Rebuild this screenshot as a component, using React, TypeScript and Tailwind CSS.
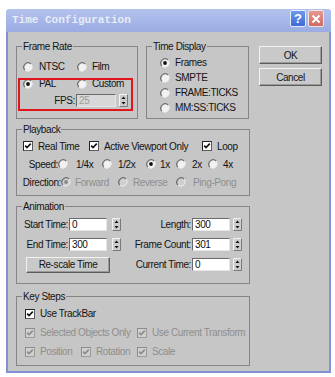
import React from 'react';

const FONT = "font-['Liberation_Sans',Arial,sans-serif] text-[10px] tracking-[-0.4px] whitespace-nowrap";

function Radio({ checked = false, disabled = false }: { checked?: boolean; disabled?: boolean }) {
  return (
    <svg width="10" height="10" viewBox="0 0 10 10" className="shrink-0">
      <circle cx="5" cy="5" r="4.4" fill={disabled ? '#cfcfcf' : '#f2f2f2'} />
      <path d="M1.9 8.1 A4.4 4.4 0 0 1 8.1 1.9" stroke="#6e6e6e" strokeWidth="1.3" fill="none" />
      <path d="M8.1 1.9 A4.4 4.4 0 0 1 1.9 8.1" stroke="#ececec" strokeWidth="1" fill="none" />
      {checked && <circle cx="5" cy="5" r="1.9" fill={disabled ? '#8a8a8a' : '#111'} />}
    </svg>
  );
}

function Check({ checked = true, disabled = false }: { checked?: boolean; disabled?: boolean }) {
  return (
    <svg width="10" height="10" viewBox="0 0 10 10" className="shrink-0">
      <rect x="0.5" y="0.5" width="9" height="9" fill={disabled ? '#d0d0d0' : '#fff'} stroke={disabled ? '#9c9c9c' : '#5a5a5a'} />
      <path d="M0.5 9.5 V0.5 H9.5" stroke={disabled ? '#8c8c8c' : '#222'} fill="none" />
      {checked && (
        <path d="M2.2 4.6 L4 6.6 L7.8 2.6" stroke={disabled ? '#8a8a8a' : '#111'} strokeWidth="1.6" fill="none" />
      )}
    </svg>
  );
}

function Spinner() {
  return (
    <svg width="9" height="13" viewBox="0 0 9 13" className="shrink-0">
      <rect x="0" y="0" width="9" height="13" fill="#cdcdcd" />
      <path d="M0.5 12.5 V0.5 H8.5" stroke="#f2f2f2" fill="none" />
      <path d="M0.5 12.5 H8.5 V0.5" stroke="#7a7a7a" fill="none" />
      <path d="M4.5 2.5 L6.5 5 H2.5 Z" fill="#111" />
      <path d="M4.5 10.5 L6.5 8 H2.5 Z" fill="#111" />
    </svg>
  );
}

function Field({ value, w, disabled = false }: { value: string; w: string; disabled?: boolean }) {
  return (
    <div
      className={`${w} h-[13px] border border-t-[#6a6a6a] border-l-[#6a6a6a] border-r-[#e6e6e6] border-b-[#e6e6e6] pl-[2px] text-[10px] leading-[11px] ${
        disabled ? 'bg-[#d8d8d8] text-[#9a9a9a]' : 'bg-white text-[#111]'
      }`}
    >
      {value}
    </div>
  );
}

function Button({ children, className }: { children: React.ReactNode; className: string }) {
  return (
    <div
      className={`${className} flex items-center justify-center border border-t-[#f2f2f2] border-l-[#f2f2f2] border-r-[#5c5c5c] border-b-[#5c5c5c] bg-[#c9c9c9] shadow-[inset_-1px_-1px_0_#9a9a9a]`}
    >
      {children}
    </div>
  );
}

function Group({ title, className, children }: { title: string; className: string; children: React.ReactNode }) {
  return (
    <fieldset className={`border border-[#858585] ${className}`}>
      <legend className="ml-[5px] px-[1px] leading-[13px]">{title}</legend>
      {children}
    </fieldset>
  );
}

function Opt({ w, gap, children, dim = false }: { w: string; gap: string; children: React.ReactNode; dim?: boolean }) {
  return <div className={`flex items-center ${w} ${gap} ${dim ? 'text-[#8e8e8e]' : ''}`}>{children}</div>;
}

function TitleBar() {
  return (
    <div className="h-[23px] flex items-center bg-linear-to-b from-[#b3c1ec] to-[#9aace3] rounded-t-[3px] pl-[6px] pr-[7px]">
      <span className="font-['Liberation_Mono',monospace] font-bold text-[11px] tracking-normal text-[#e8ecf6]">
        Time Configuration
      </span>
      <div className="ml-auto self-start mt-[1px] flex gap-[2px]">
        <div className="w-[16px] h-[17px] rounded-[2px] border border-[#e4ebfb] bg-linear-to-b from-[#6f98ec] to-[#3f6ad8] flex items-center justify-center text-white font-bold text-[13px] tracking-normal leading-none font-['Liberation_Sans',sans-serif]">
          ?
        </div>
        <div className="w-[16px] h-[17px] rounded-[2px] border border-[#f1e2e2] bg-linear-to-b from-[#e39a92] to-[#cf6a62] flex items-center justify-center">
          <svg width="10" height="10" viewBox="0 0 10 10">
            <path d="M1.5 1.5 L8.5 8.5 M8.5 1.5 L1.5 8.5" stroke="#fff" strokeWidth="2" />
          </svg>
        </div>
      </div>
    </div>
  );
}

export default function App() {
  return (
    <div className={`w-[335px] h-[377px] bg-white pt-[9px] pl-[6px] ${FONT} text-[#141414]`}>
      <div className="w-[325px] flex flex-col">
        <TitleBar />
        <div className="relative h-[341px] border-x-2 border-b-2 border-[#8290d6] bg-[#c6c6c6] pl-[8px] pt-[8px]">
          <div className="flex items-start">
            <Group title="Frame Rate" className="w-[122px] h-[79px]">
              <div className="pl-[6px] pt-[5px]">
                <div className="flex h-[17px] items-center">
                  <Opt w="w-[54px]" gap="gap-[6px]">
                    <Radio />
                    NTSC
                  </Opt>
                  <Opt w="w-[50px]" gap="gap-[5px]">
                    <Radio />
                    Film
                  </Opt>
                </div>
                <div className="flex h-[17px] items-center">
                  <Opt w="w-[54px]" gap="gap-[6px]">
                    <Radio checked />
                    PAL
                  </Opt>
                  <Opt w="w-[50px]" gap="gap-[5px]">
                    <Radio />
                    Custom
                  </Opt>
                </div>
                <div className="flex h-[16px] items-center">
                  <span className="w-[52px] text-right">FPS:</span>
                  <div className="ml-[1px]">
                    <Field value="25" w="w-[40px]" disabled />
                  </div>
                  <div className="ml-[3px]">
                    <Spinner />
                  </div>
                </div>
              </div>
            </Group>

            <Group title="Time Display" className="ml-[8px] w-[103px] h-[79px]">
              <div className="pl-[13px] pt-[2px]">
                {[
                  ['Frames', true],
                  ['SMPTE', false],
                  ['FRAME:TICKS', false],
                  ['MM:SS:TICKS', false],
                ].map(([label, on]) => (
                  <div key={label as string} className="flex h-[15px] items-center gap-[5px]">
                    <Radio checked={on as boolean} />
                    {label as string}
                  </div>
                ))}
              </div>
            </Group>

            <div className="ml-[10px] mt-[6px] flex flex-col gap-[4px]">
              <Button className="w-[63px] h-[18px]">OK</Button>
              <Button className="w-[63px] h-[18px]">Cancel</Button>
            </div>
          </div>

          <Group title="Playback" className="mt-[4px] w-[234px] h-[73px]">
            <div className="pt-[1px]">
              <div className="flex h-[18px] items-center pl-[6px]">
                <Opt w="w-[66px]" gap="gap-[5px]">
                  <Check />
                  Real Time
                </Opt>
                <Opt w="w-[113px]" gap="gap-[5px]">
                  <Check />
                  Active Viewport Only
                </Opt>
                <Opt w="w-[40px]" gap="gap-[5px]">
                  <Check />
                  Loop
                </Opt>
              </div>
              <div className="flex h-[18px] items-center">
                <span className="w-[41px] text-right">Speed:</span>
                <Opt w="w-[44px]" gap="gap-[8px]">
                  <Radio />
                  1/4x
                </Opt>
                <Opt w="w-[44px]" gap="gap-[6px]">
                  <Radio />
                  1/2x
                </Opt>
                <Opt w="w-[30px]" gap="gap-[4px]">
                  <Radio checked />
                  1x
                </Opt>
                <Opt w="w-[32px]" gap="gap-[6px]">
                  <Radio />
                  2x
                </Opt>
                <Opt w="w-[26px]" gap="gap-[5px]">
                  <Radio />
                  4x
                </Opt>
              </div>
              <div className="flex h-[18px] items-center">
                <span className="w-[44px] text-right">Direction:</span>
                <Opt w="w-[57px]" gap="gap-[4px]" dim>
                  <Radio checked disabled />
                  Forward
                </Opt>
                <Opt w="w-[58px]" gap="gap-[5px]" dim>
                  <Radio disabled />
                  Reverse
                </Opt>
                <Opt w="w-[56px]" gap="gap-[7px]" dim>
                  <Radio disabled />
                  Ping-Pong
                </Opt>
              </div>
            </div>
          </Group>

          <Group title="Animation" className="mt-[4px] w-[234px] h-[84px]">
            <div className="pt-[1px]">
              <div className="flex h-[20px] items-center">
                <div className="w-[104px] flex items-center">
                  <span className="w-[52px] text-right">Start Time:</span>
                  <div className="ml-[1px]">
                    <Field value="0" w="w-[38px]" />
                  </div>
                  <div className="ml-[5px]">
                    <Spinner />
                  </div>
                </div>
                <span className="w-[70px] text-right">Length:</span>
                <div className="ml-[1px]">
                  <Field value="300" w="w-[38px]" />
                </div>
                <div className="ml-[3px]">
                  <Spinner />
                </div>
              </div>
              <div className="flex h-[20px] items-center">
                <div className="w-[104px] flex items-center">
                  <span className="w-[52px] text-right">End Time:</span>
                  <div className="ml-[1px]">
                    <Field value="300" w="w-[38px]" />
                  </div>
                  <div className="ml-[5px]">
                    <Spinner />
                  </div>
                </div>
                <span className="w-[70px] text-right">Frame Count:</span>
                <div className="ml-[1px]">
                  <Field value="301" w="w-[38px]" />
                </div>
                <div className="ml-[3px]">
                  <Spinner />
                </div>
              </div>
              <div className="flex h-[21px] items-center">
                <div className="w-[104px] flex items-center">
                  <Button className="ml-[9px] w-[84px] h-[16px]">Re-scale Time</Button>
                </div>
                <span className="w-[70px] text-right">Current Time:</span>
                <div className="ml-[1px]">
                  <Field value="0" w="w-[38px]" />
                </div>
                <div className="ml-[3px]">
                  <Spinner />
                </div>
              </div>
            </div>
          </Group>

          <Group title="Key Steps" className="mt-[6px] w-[234px] h-[76px]">
            <div className="pt-[1px] pl-[8px]">
              <div className="flex h-[19px] items-center">
                <Opt w="w-[112px]" gap="gap-[5px]">
                  <Check />
                  Use TrackBar
                </Opt>
              </div>
              <div className="flex h-[19px] items-center">
                <Opt w="w-[112px]" gap="gap-[5px]" dim>
                  <Check disabled />
                  Selected Objects Only
                </Opt>
                <Opt w="w-[104px]" gap="gap-[5px]" dim>
                  <Check disabled />
                  Use Current Transform
                </Opt>
              </div>
              <div className="flex h-[19px] items-center">
                <Opt w="w-[56px]" gap="gap-[5px]" dim>
                  <Check disabled />
                  Position
                </Opt>
                <Opt w="w-[56px]" gap="gap-[5px]" dim>
                  <Check disabled />
                  Rotation
                </Opt>
                <Opt w="w-[50px]" gap="gap-[5px]" dim>
                  <Check disabled />
                  Scale
                </Opt>
              </div>
            </div>
          </Group>

          <div className="absolute left-[10px] top-[46px] w-[115px] h-[33px] border-2 border-[#e2141c]" />
        </div>
      </div>
    </div>
  );
}
